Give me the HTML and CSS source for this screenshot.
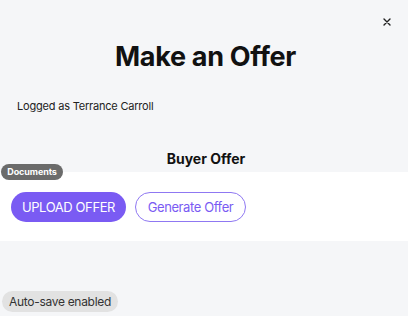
FILE: index.html
```html
<!DOCTYPE html>
<html>
<head>
<meta charset="utf-8">
<link rel="stylesheet" href="styles.css">
</head>
<body>
<div class="page">
  <div class="topbar">
    <button class="close" aria-label="Close">
      <svg width="8" height="8" viewBox="0 0 8 8"><path d="M1 1L7 7M7 1L1 7" stroke="#222" stroke-width="1.4" stroke-linecap="round"/></svg>
    </button>
  </div>
  <h1 class="title">Make an Offer</h1>
  <p class="logged">Logged as Terrance Carroll</p>
  <h2 class="subtitle">Buyer Offer</h2>
  <section class="panel">
    <span class="badge">Documents</span>
    <div class="actions">
      <button class="btn btn-primary">UPLOAD OFFER</button>
      <button class="btn btn-outline">Generate Offer</button>
    </div>
  </section>
  <div class="footer">
    <span class="autosave">Auto-save enabled</span>
  </div>
</div>
</body>
</html>
```

FILE: styles.css
```css
html, body {
  margin: 0;
  padding: 0;
  background: #f5f6f8;
  font-family: Inter, "Noto Sans", sans-serif;
  color: #111;
}
.page {
  width: 408px;
  height: 316px;
  display: flex;
  flex-direction: column;
}
.topbar {
  display: flex;
  justify-content: flex-end;
  padding: 17px 16px 0 0;
  height: 11px;
}
.close {
  border: 0;
  background: none;
  padding: 0;
  width: 10px;
  height: 10px;
  display: flex;
  align-items: center;
  justify-content: center;
  cursor: pointer;
}
.title {
  margin: 12px 0 0;
  text-align: center;
  font-size: 27px;
  font-weight: 700;
  letter-spacing: -0.3px;
  line-height: 34px;
  padding-left: 3px;
}
.logged {
  margin: 25px 0 0 17px;
  font-size: 11px;
  line-height: 14px;
  letter-spacing: -0.2px;
  color: #222;
}
.subtitle {
  margin: 37px 0 0;
  text-align: center;
  font-size: 14px;
  font-weight: 700;
  line-height: 18px;
  padding-left: 4px;
}
.panel {
  position: relative;
  margin-top: 4px;
  background: #fff;
  height: 69px;
  display: flex;
  align-items: center;
}
.badge {
  position: absolute;
  left: 1px;
  top: -8px;
  height: 16px;
  width: 62px;
  box-sizing: border-box;
  text-align: center;
  border-radius: 8px;
  background: #6b6b6b;
  color: #fff;
  font-size: 9px;
  font-weight: 700;
  letter-spacing: -0.1px;
  line-height: 16px;
}
.actions {
  display: flex;
  gap: 9px;
  padding: 0 0 0 11px;
  margin-top: 1px;
}
.btn {
  height: 30px;
  border-radius: 15px;
  font-family: inherit;
  font-size: 13px;
  padding: 0;
  white-space: nowrap;
  letter-spacing: -0.4px;
}
.btn-primary {
  width: 115px;
  background: #7a5bf3;
  color: #fff;
  border: 0;
}
.btn-outline {
  width: 111px;
  background: #fff;
  color: #7a5bf3;
  border: 1px solid #8f78f2;
}
.footer {
  margin-top: 49px;
  padding-left: 2px;
}
.autosave {
  display: inline-block;
  height: 21px;
  line-height: 21px;
  width: 116px;
  box-sizing: border-box;
  text-align: center;
  border-radius: 11px;
  background: #e2e2e2;
  font-size: 12px;
  letter-spacing: -0.3px;
  color: #333;
}
```
